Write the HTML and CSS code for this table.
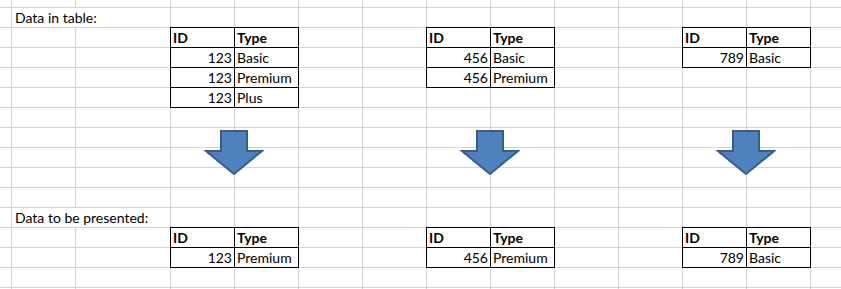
FILE: index.html
```html
<!DOCTYPE html>
<html lang="en">
<head>
<meta charset="utf-8">
<title>Sheet</title>
<link rel="stylesheet" href="styles.css">
</head>
<body>
<div class="sheet">
  <div class="row"><span></span><span></span><span></span><span></span><span></span><span></span><span></span><span></span><span></span><span></span><span></span><span></span><span></span><span></span></div>
  <div class="row"><span></span><span class="wide">Data in table:</span><span></span><span></span><span></span><span></span><span></span><span></span><span></span><span></span><span></span><span></span><span></span></div>
  <div class="row"><span></span><span></span><span></span><span class="t h">ID</span><span class="t h">Type</span><span></span><span></span><span class="t h">ID</span><span class="t h">Type</span><span></span><span></span><span class="t h">ID</span><span class="t h">Type</span><span></span></div>
  <div class="row"><span></span><span></span><span></span><span class="t num">123</span><span class="t">Basic</span><span></span><span></span><span class="t num">456</span><span class="t">Basic</span><span></span><span></span><span class="t num">789</span><span class="t">Basic</span><span></span></div>
  <div class="row"><span></span><span></span><span></span><span class="t num">123</span><span class="t">Premium</span><span></span><span></span><span class="t num">456</span><span class="t">Premium</span><span></span><span></span><span></span><span></span><span></span></div>
  <div class="row"><span></span><span></span><span></span><span class="t num">123</span><span class="t">Plus</span><span></span><span></span><span></span><span></span><span></span><span></span><span></span><span></span><span></span></div>
  <div class="row"><span></span><span></span><span></span><span></span><span></span><span></span><span></span><span></span><span></span><span></span><span></span><span></span><span></span><span></span></div>
  <div class="row"><span></span><span></span><span></span><span></span><span></span><span></span><span></span><span></span><span></span><span></span><span></span><span></span><span></span><span></span></div>
  <div class="row"><span></span><span></span><span></span><span></span><span></span><span></span><span></span><span></span><span></span><span></span><span></span><span></span><span></span><span></span></div>
  <div class="row"><span></span><span></span><span></span><span></span><span></span><span></span><span></span><span></span><span></span><span></span><span></span><span></span><span></span><span></span></div>
  <div class="row"><span></span><span></span><span></span><span></span><span></span><span></span><span></span><span></span><span></span><span></span><span></span><span></span><span></span><span></span></div>
  <div class="row"><span></span><span class="wide">Data to be presented:</span><span></span><span></span><span></span><span></span><span></span><span></span><span></span><span></span><span></span><span></span><span></span></div>
  <div class="row"><span></span><span></span><span></span><span class="t h">ID</span><span class="t h">Type</span><span></span><span></span><span class="t h">ID</span><span class="t h">Type</span><span></span><span></span><span class="t h">ID</span><span class="t h">Type</span><span></span></div>
  <div class="row"><span></span><span></span><span></span><span class="t num">123</span><span class="t">Premium</span><span></span><span></span><span class="t num">456</span><span class="t">Premium</span><span></span><span></span><span class="t num">789</span><span class="t">Basic</span><span></span></div>
  <div class="row"><span></span><span></span><span></span><span></span><span></span><span></span><span></span><span></span><span></span><span></span><span></span><span></span><span></span><span></span></div>
  <div class="row"><span></span><span></span><span></span><span></span><span></span><span></span><span></span><span></span><span></span><span></span><span></span><span></span><span></span><span></span></div>

  <svg class="arrow a1" width="60" height="48" viewBox="0 0 60 48"><path d="M17 2H43V22H58L30 45L2 22H17Z"/></svg>
  <svg class="arrow a2" width="60" height="48" viewBox="0 0 60 48"><path d="M17 2H43V22H58L30 45L2 22H17Z"/></svg>
  <svg class="arrow a3" width="60" height="48" viewBox="0 0 60 48"><path d="M17 2H43V22H58L30 45L2 22H17Z"/></svg>
</div>
</body>
</html>
```
FILE: styles.css
```css
body {
  margin: 0;
  background: #fff;
}

.sheet {
  position: relative;
  display: grid;
  grid-template-columns: 11px 63px 94px repeat(10, 63px) 1fr;
  grid-template-rows: 7px repeat(14, 19px) 1fr;
  gap: 1px;
  width: 841px;
  height: 289px;
  overflow: hidden;
  background: #d4d4d4;
  font-family: Lato, "Liberation Sans", sans-serif;
  font-size: 14px;
  color: #000;
}

.row {
  display: contents;
}

.row > * {
  background: #fff;
  white-space: nowrap;
  line-height: 20px;
  padding: 0 2px;
  overflow: hidden;
}

.wide {
  grid-column: span 2;
  padding-left: 3px;
}

.t {
  outline: 1px solid #000;
}

.h {
  font-weight: bold;
}

.num {
  text-align: right;
}

.arrow {
  position: absolute;
  top: 129px;
  fill: #4f81bd;
  stroke: #385d8a;
  stroke-width: 2;
}

.a1 { left: 204px; }
.a2 { left: 460px; }
.a3 { left: 716px; }
```
